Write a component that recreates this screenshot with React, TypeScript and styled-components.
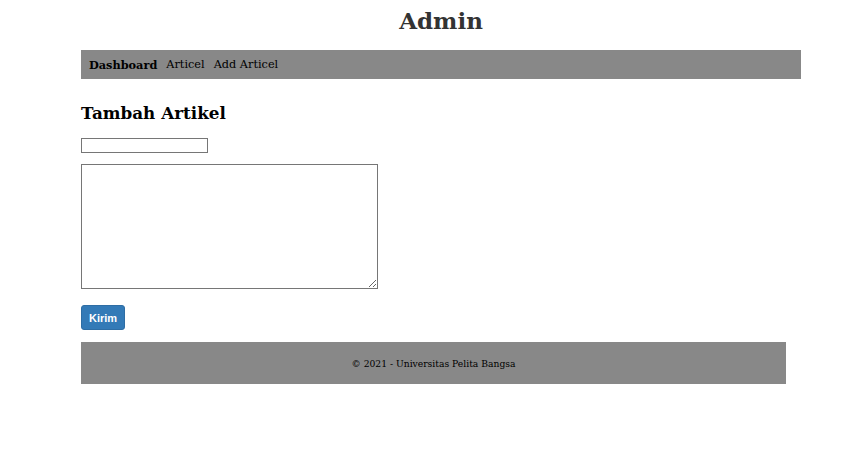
import styled, { createGlobalStyle } from "styled-components";

const GlobalStyle = createGlobalStyle`
  body {
    margin: 0;
    background: #fff;
    font-family: "DejaVu Serif", Georgia, serif;
    color: #000;
  }
`;

function App() {
  return (
    <>
      <GlobalStyle />
      <Container>
        <Header>Admin</Header>
        <Nav>
          <NavLink $active>Dashboard</NavLink>
          <NavLink>Articel</NavLink>
          <NavLink>Add Articel</NavLink>
        </Nav>
        <Main>
          <Title>Tambah Artikel</Title>
          <form>
            <TextInput type="text" />
            <TextArea />
            <Button type="button">Kirim</Button>
          </form>
        </Main>
        <Footer>© 2021 - Universitas Pelita Bangsa</Footer>
      </Container>
    </>
  );
}

const Container = styled.div`
  width: 720px;
  margin-left: 81px;
`;
const Header = styled.h1`
  margin: 0;
  height: 50px;
  line-height: 42px;
  text-align: center;
  font-size: 23px;
  font-weight: bold;
  color: #333;
`;
const Nav = styled.nav`
  display: flex;
  align-items: center;
  gap: 9px;
  height: 29px;
  padding: 0 8px;
  background: #888;
`;
const NavLink = styled.a<{ $active?: boolean }>`
  font-size: 11.3px;
  color: #000;
  text-decoration: none;
  font-weight: ${(p) => (p.$active ? "bold" : "normal")};
  cursor: pointer;
`;
const Main = styled.div`
  padding-top: 22px;
`;
const Title = styled.h2`
  margin: 0 0 13px;
  font-size: 16.8px;
  line-height: 24px;
  font-weight: bold;
`;
const TextInput = styled.input`
  display: block;
  box-sizing: border-box;
  width: 127px;
  height: 15px;
  margin: 0 0 11px;
  padding: 0;
  border: 1px solid #767676;
`;
const TextArea = styled.textarea`
  display: block;
  box-sizing: border-box;
  width: 297px;
  height: 125px;
  margin: 0 0 16px;
  border: 1px solid #767676;
  padding: 2px;
`;
const Button = styled.button`
  display: block;
  width: 44px;
  height: 25px;
  padding: 0;
  border: 1px solid #2e6da4;
  border-radius: 3px;
  background: #337ab7;
  color: #fff;
  font-family: "Liberation Sans", Arial, sans-serif;
  font-weight: bold;
  font-size: 11px;
  cursor: pointer;
`;
const Footer = styled.footer`
  margin-top: 12px;
  width: 705px;
  height: 42px;
  display: flex;
  align-items: center;
  justify-content: center;
  background: #888;
  font-size: 9.2px;
`;

export default App;
